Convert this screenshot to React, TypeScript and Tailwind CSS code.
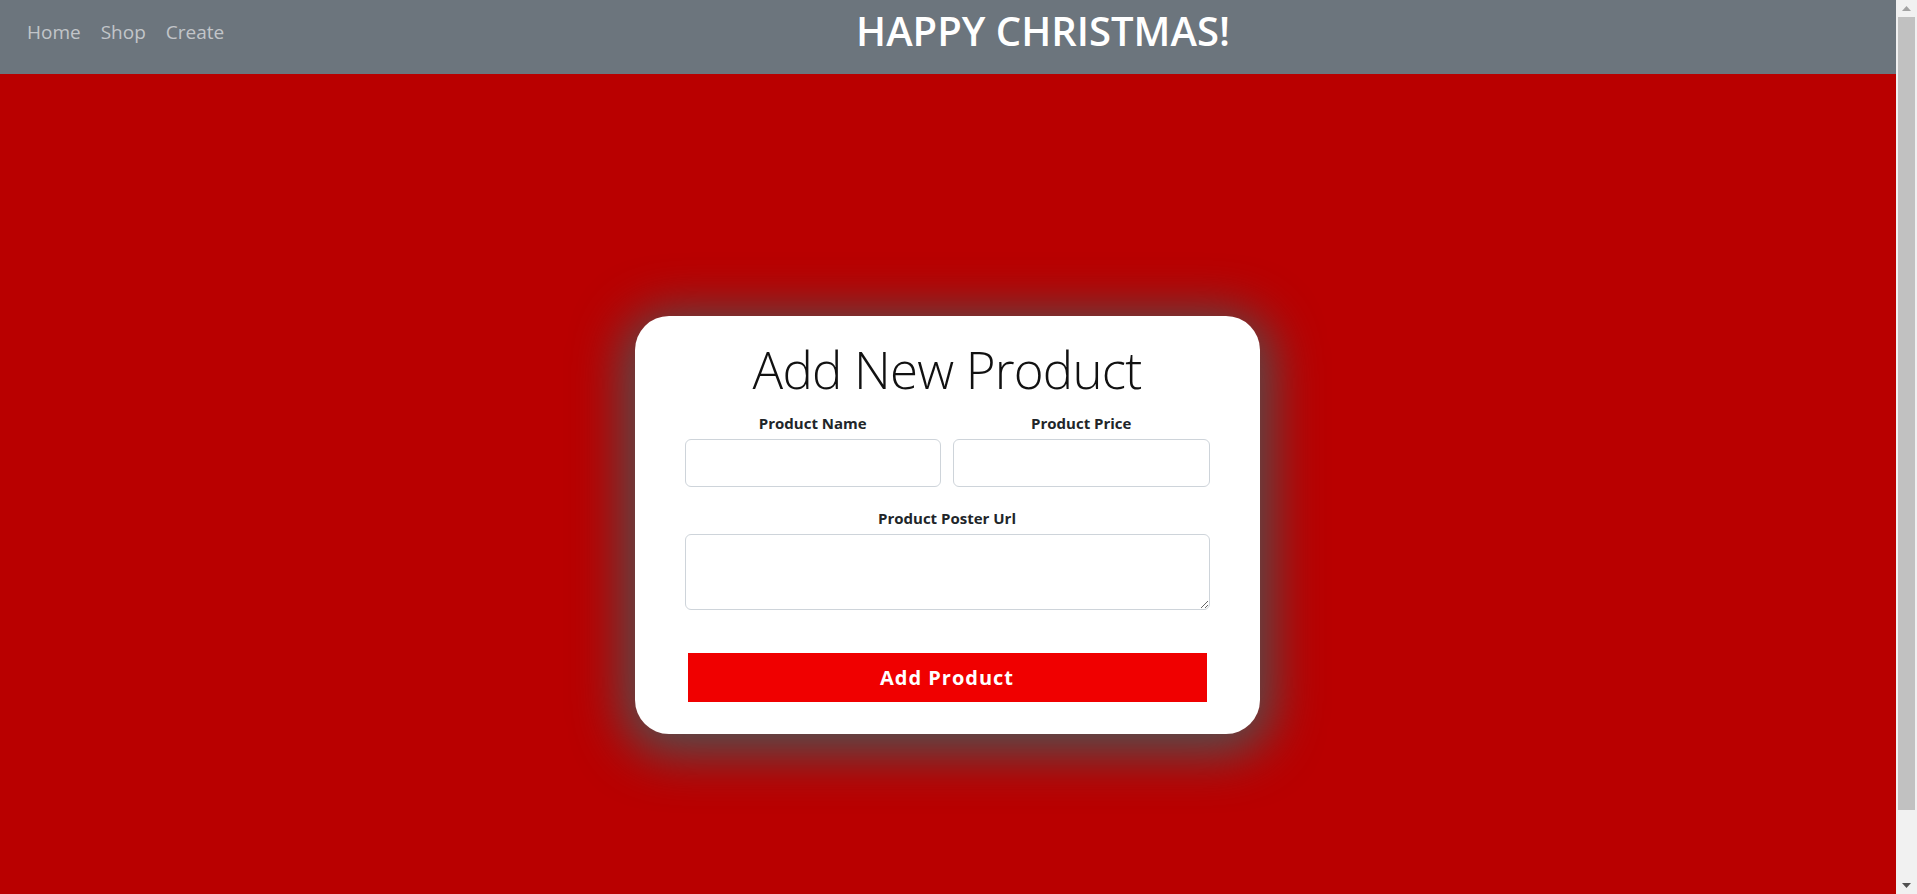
import { useState } from 'react';

// Kopfzeile mit Navigation und Titel
function Header() {
  const links = ['Home', 'Shop', 'Create'];
  return (
    <header className="h-[74px] shrink-0 bg-[#6c757d] flex items-start">
      <nav className="w-[233px] shrink-0 flex items-start pl-[17px] mt-[17px]">
        {links.map((l) => (
          <a key={l} href="#" className="px-[10px] text-[19px] leading-[30px] text-[#c2c5c9] hover:text-white">
            {l}
          </a>
        ))}
      </nav>
      <div className="flex-1 flex justify-center pr-[43px] mt-[7px]">
        <h1 className="text-[40px] leading-[48px] font-semibold text-white">HAPPY CHRISTMAS!</h1>
      </div>
    </header>
  );
}

// Nachgebildete Scrollleiste des Browsers
function ScrollBar() {
  return (
    <div className="w-[21px] shrink-0 h-full bg-[#f1f1f1] flex flex-col items-center">
      <div className="h-[17px] w-full flex items-center justify-center">
        <svg width="9" height="5" viewBox="0 0 9 5"><path d="M0 5 L4.5 0 L9 5 Z" fill="#a3a3a3" /></svg>
      </div>
      <div className="w-[17px] h-[793px] bg-[#c1c1c1]" />
      <div className="flex-1" />
      <div className="h-[17px] w-full flex items-center justify-center">
        <svg width="9" height="5" viewBox="0 0 9 5"><path d="M0 0 L9 0 L4.5 5 Z" fill="#505050" /></svg>
      </div>
    </div>
  );
}

export default function App() {
  const [name, setName] = useState('');
  const [price, setPrice] = useState('');
  const [poster, setPoster] = useState('');

  const inputClass =
    'w-full h-[48px] px-3 bg-white border border-[#ced4da] rounded-[6px] text-[16px] outline-none focus:border-[#86b7fe]';

  return (
    <div className="h-screen flex overflow-hidden font-['Open_Sans','Noto_Sans',sans-serif] text-[#212529]">
      <div className="flex-1 min-w-0 h-full overflow-hidden">
        <Header />

        <main className="min-h-[894px] bg-[#b90000] flex items-center justify-center pt-[8px] pr-[2px]">
          <form
            onSubmit={(e) => e.preventDefault()}
            className="w-[625px] bg-white rounded-[34px] px-[50px] pt-[20px] pb-[32px] shadow-[0_8px_50px_12px_rgba(80,80,80,1)]"
          >
            <h2 className="text-center text-[51px] leading-[67px] tracking-[-0.8px] font-light text-[#111]">
              Add New Product
            </h2>

            <div className="grid grid-cols-2 gap-x-[12px] mt-[8px]">
              <div>
                <label className="block text-center text-[15px] leading-[24px] font-bold mb-[4px]">Product Name</label>
                <input value={name} onChange={(e) => setName(e.target.value)} className={inputClass} />
              </div>
              <div>
                <label className="block text-center text-[15px] leading-[24px] font-bold mb-[4px]">Product Price</label>
                <input value={price} onChange={(e) => setPrice(e.target.value)} className={inputClass} />
              </div>
            </div>

            <div className="mt-[19px]">
              <label className="block text-center text-[15px] leading-[24px] font-bold mb-[4px]">Product Poster Url</label>
              <textarea
                value={poster}
                onChange={(e) => setPoster(e.target.value)}
                className="block w-full h-[76px] px-3 py-2 bg-white border border-[#ced4da] rounded-[6px] text-[16px] outline-none focus:border-[#86b7fe]"
              />
            </div>

            <div className="px-[3px] mt-[43px]">
              <button
                type="submit"
                className="w-full h-[49px] bg-[#f00000] text-white text-[20px] font-bold tracking-[1px]"
              >
                Add Product
              </button>
            </div>
          </form>
        </main>
      </div>
      <ScrollBar />
    </div>
  );
}
